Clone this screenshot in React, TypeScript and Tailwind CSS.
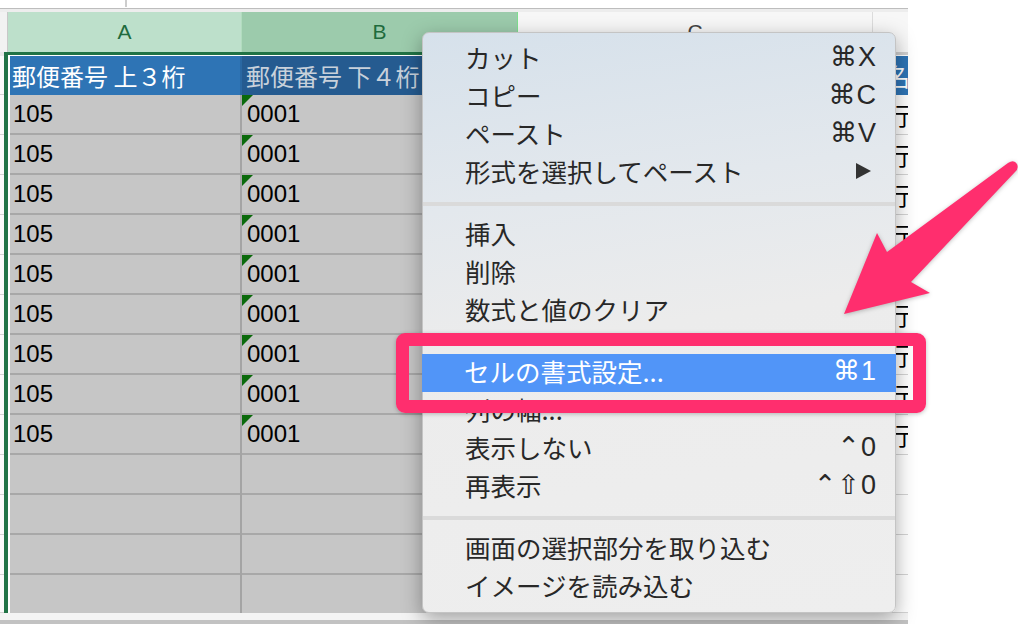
import React from "react";

type Entry = { label: string; keys?: string; sub?: boolean; active?: boolean } | "sep";

const MENU: Entry[] = [
  { label: "カット", keys: "⌘X" },
  { label: "コピー", keys: "⌘C" },
  { label: "ペースト", keys: "⌘V" },
  { label: "形式を選択してペースト", sub: true },
  "sep",
  { label: "挿入" },
  { label: "削除" },
  { label: "数式と値のクリア" },
  "sep",
  { label: "セルの書式設定...", keys: "⌘1", active: true },
  { label: "列の幅..." },
  { label: "表示しない", keys: "⌃0" },
  { label: "再表示", keys: "⌃⇧0" },
  "sep",
  { label: "画面の選択部分を取り込む" },
  { label: "イメージを読み込む" },
];

const ROWS = Array.from({ length: 13 }, (_, i) => i);

function SheetRow({ filled, last }: { filled: boolean; last: boolean }) {
  return (
    <div className={last ? "flex h-[38px] shrink-0" : "flex h-[40px] shrink-0"}>
      <div className="w-[4px] bg-[#fafafa] border-b border-[#d2d2d2]" />
      <div className="w-[4px] bg-[#217346]" />
      <div className="w-[2px] bg-white" />
      <div className={last ? "w-[230px] bg-[#c6c6c6] flex items-center pl-[3px]" : "w-[230px] bg-[#c6c6c6] border-b-2 border-[#a8a8a8] flex items-center pl-[3px]"}>
        {filled && <span className="text-[24px] text-black leading-none">105</span>}
      </div>
      <div className="w-[2px] bg-[#a4a4a4]" />
      <div className={last ? "relative w-[275px] bg-[#c6c6c6] flex items-center pl-[5px]" : "relative w-[275px] bg-[#c6c6c6] border-b-2 border-[#a8a8a8] flex items-center pl-[5px]"}>
        {filled && (
          <>
            <span className="absolute left-0 top-0 w-0 h-0 border-t-[11px] border-t-[#0b6a0b] border-r-[11px] border-r-transparent" />
            <span className="text-[24px] text-black leading-none">0001</span>
          </>
        )}
      </div>
      <div className="w-[354px] bg-white border-b border-[#d4d4d4]" />
      <div className="w-[1px] bg-[#d4d4d4]" />
      <div className="flex-1 bg-white border-b border-[#d4d4d4] flex items-center pl-[14px] overflow-hidden whitespace-nowrap">
        {filled && <span className="text-[24px] text-black font-['Noto_Sans_CJK_JP',sans-serif] leading-none">行</span>}
      </div>
    </div>
  );
}

function ContextMenu() {
  return (
    <div className="absolute left-[422px] top-[32px] w-[474px] h-[581px] rounded-[7px] pt-[7px] pb-[8px] border border-[#c4c4c4] bg-[linear-gradient(172deg,#d6e1eb_0%,#e3e8ed_28%,#ececec_50%,#eeeeee_100%)] shadow-[0_6px_20px_rgba(0,0,0,0.34)] font-['Noto_Sans_CJK_JP',sans-serif] text-[25.5px] text-[#282828]">
      {MENU.map((m, i) =>
        m === "sep" ? (
          <div key={i} className="h-[24px] pt-[10px]">
            <div className="h-[4px] bg-[#dadada]" />
          </div>
        ) : (
          <div
            key={i}
            className={
              m.active
                ? "h-[38px] flex items-center justify-between pl-[42px] pr-[19px] bg-[#5195f8] text-white -mx-px"
                : "h-[38px] flex items-center justify-between pl-[42px] pr-[18px]"
            }
          >
            <span className="relative -top-[2px] leading-[38px] whitespace-nowrap">{m.label}</span>
            {m.keys && (
              <span className="relative -top-[2px] leading-[38px] text-[27px] font-['Liberation_Sans','DejaVu_Sans',sans-serif] tracking-[1px]">{m.keys}</span>
            )}
            {m.sub && (
              <span className="relative -top-[2px] mr-[6px] w-0 h-0 border-y-[8px] border-y-transparent border-l-[15px] border-l-[#333]" />
            )}
          </div>
        )
      )}
    </div>
  );
}

export default function App() {
  return (
    <div className="relative w-[1018px] h-[624px] overflow-hidden bg-white font-['Liberation_Sans',sans-serif]">
      <div className="flex flex-col w-[908px] h-full">
        {/* top strip */}
        <div className="h-[8px] flex shrink-0 bg-white">
          <div className="w-[127px] h-[7px] border-r-2 border-[#cdcdcd]" />
        </div>
        <div className="h-[1px] bg-[#bdbdbd] shrink-0" />
        <div className="h-[3px] bg-[#ededed] shrink-0" />

        {/* column letters */}
        <div className="flex h-[40px] shrink-0 text-[21px]">
          <div className="w-[8px] bg-[#f2f2f2] border-r border-[#c8c8c8]" />
          <div className="w-[233px] bg-[#bde0cb] flex items-center justify-center text-[#1f6b3d]">A</div>
          <div className="w-[1px] bg-[#b2dcbf]" />
          <div className="w-[275px] bg-[#9ccbac] flex items-center justify-center text-[#1f6b3d]">B</div>
          <div className="w-[1px] bg-[#7fe08f]" />
          <div className="w-[354px] bg-[#f7f7f7] flex items-center justify-center text-[#444]">C</div>
          <div className="w-[1px] bg-[#dcdcdc]" />
          <div className="flex-1 bg-[#f7f7f7]" />
        </div>
        <div className="flex h-[3px] shrink-0">
          <div className="w-[4px] bg-[#e8e8e8]" />
          <div className="w-[513px] bg-[#217346]" />
          <div className="flex-1 bg-[#cfcfcf]" />
        </div>
        <div className="flex h-[1px] shrink-0">
          <div className="w-[4px] bg-[#e8e8e8]" />
          <div className="w-[4px] bg-[#217346]" />
          <div className="flex-1 bg-white" />
        </div>

        {/* header row */}
        <div className="flex h-[39px] shrink-0 font-['Noto_Sans_CJK_JP',sans-serif] text-[24px] whitespace-nowrap">
          <div className="w-[4px] bg-[#fafafa] border-b border-[#d2d2d2]" />
          <div className="w-[4px] bg-[#217346]" />
          <div className="w-[2px] bg-white" />
          <div className="w-[230px] bg-[#2e74b5] text-white flex items-center pl-[2px] overflow-hidden">郵便番号 上３桁</div>
          <div className="w-[2px] bg-[#2a68a2]" />
          <div className="w-[275px] bg-[#255b90] text-[#c8d1db] flex items-center pl-[4px] overflow-hidden">郵便番号 下４桁</div>
          <div className="w-[354px] bg-[#2e74b5]" />
          <div className="w-[1px] bg-[#2e74b5]" />
          <div className="flex-1 bg-[#2e74b5] text-white flex items-center pl-[14px] overflow-hidden">名</div>
        </div>

        {ROWS.map((i) => (
          <SheetRow key={i} filled={i < 9} last={i === 12} />
        ))}

        <div className="flex-1 bg-[#f4f4f4] border-b-[4px] border-[#c2c2c2]" />
      </div>

      <ContextMenu />

      {/* highlight box */}
      <div className="absolute left-[396px] top-[333px] w-[530px] h-[80px] border-[13px] border-[#ff2e6e] rounded-[9px] shadow-[0_1px_4px_rgba(0,0,0,0.25)]" />

      {/* arrow */}
      <svg className="absolute left-0 top-0 pointer-events-none" width="1018" height="624" viewBox="0 0 1018 624">
        <path
          d="M844 314 L877 233 L887 252 L1008 163 Q1014 159 1017 164 Q1019 169 1015 172 L911 282 L930 293 Z"
          fill="#ff2e6e"
          style={{ filter: "drop-shadow(0 1px 2px rgba(0,0,0,0.25))" }}
        />
      </svg>
    </div>
  );
}
